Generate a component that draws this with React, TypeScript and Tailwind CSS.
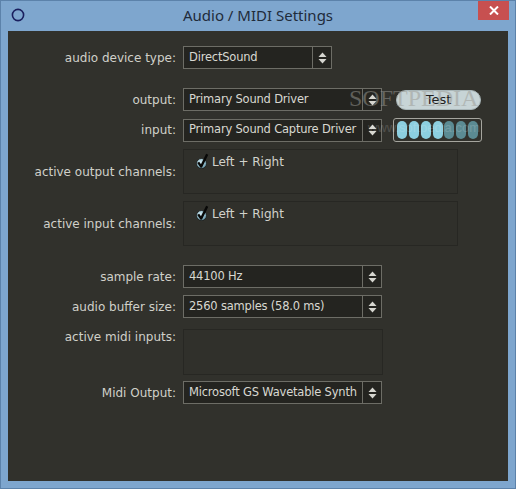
import React from "react";

const font = { fontFamily: '"DejaVu Sans", Verdana, sans-serif' };

function UpDown() {
    return (
        <svg width="9" height="12" viewBox="0 0 9 12">
            <path d="M4.5 0.5 L8.5 5 L0.5 5 Z" fill="#d6d6d0" />
            <path d="M4.5 11.5 L8.5 7 L0.5 7 Z" fill="#d6d6d0" />
        </svg>
    );
}

function Combo({ value, width }: { value: string; width: string }) {
    return (
        <div className={`flex h-[23px] ${width} border border-[#6d6d66] bg-[#242420]`}>
            <div className="flex-1 flex items-center pl-[5px] text-[11.5px] tracking-[-0.2px] text-[#d8d8d1] whitespace-nowrap overflow-hidden">
                {value}
            </div>
            <div className="w-[19px] flex items-center justify-center border-l border-[#6d6d66]">
                <UpDown />
            </div>
        </div>
    );
}

function Check() {
    return (
        <svg width="14" height="16" viewBox="0 0 14 16">
            <defs>
                <radialGradient id="cg" cx="0.4" cy="0.35" r="0.75">
                    <stop offset="0" stopColor="#d4edf5" />
                    <stop offset="1" stopColor="#5b8fa3" />
                </radialGradient>
            </defs>
            <circle cx="5.5" cy="10.5" r="5" fill="url(#cg)" stroke="#1a1a18" strokeWidth="0.8" />
            <path d="M2.2 9.4 L5.2 13.6 L11.2 1.2" fill="none" stroke="#080807" strokeWidth="2.4" strokeLinejoin="round" />
        </svg>
    );
}

function ChannelBox() {
    return (
        <div className="w-[275px] h-[45px] border border-[#272723] bg-[#30302b] pl-[12px] pt-[1px]">
            <div className="flex items-center gap-[2px]">
                <Check />
                <span className="text-[12px] text-[#d2d2cb] mt-[2px]">Left + Right</span>
            </div>
        </div>
    );
}

function Row({ label, children, className = "", alignTop = false }: { label: string; children: React.ReactNode; className?: string; alignTop?: boolean }) {
    return (
        <div className={`flex ${alignTop ? "items-start" : "items-center"} ${className}`}>
            <div className={`w-[169px] pr-[1px] text-right text-[12px] text-[#d0d0c9] whitespace-nowrap ${alignTop ? "-mt-[1px]" : ""}`}>
                {label}
            </div>
            <div className="ml-[6px] flex items-center">{children}</div>
        </div>
    );
}

export default function App() {
    const lit = [true, true, true, true, false, false, false];
    return (
        <div className="w-[516px] h-[489px] bg-[#7ea6ce] border border-[#5c82aa] flex flex-col overflow-hidden">
            {/* Title bar */}
            <div className="h-[30px] flex items-start">
                <div className="w-[40px] pl-[10px] pt-[7px]">
                    <svg width="14" height="14" viewBox="0 0 14 14">
                        <circle cx="7" cy="7" r="5.6" fill="none" stroke="#1a1f5e" strokeWidth="1.6" />
                    </svg>
                </div>
                <div className="flex-1 text-center pt-[3px] text-[15px] text-[#1f2b3a]" style={{ fontFamily: '"Noto Sans", "Open Sans", sans-serif' }}>
                    Audio / MIDI Settings
                </div>
                <div className="w-[40px] flex justify-end pr-[6px]">
                    <div className="w-[31px] h-[19px] bg-[#c75050] flex items-center justify-center">
                        <svg width="10" height="9" viewBox="0 0 10 9">
                            <path d="M1 0.5 L9 8.5 M9 0.5 L1 8.5" stroke="#ffffff" strokeWidth="2" />
                        </svg>
                    </div>
                </div>
            </div>

            {/* Content */}
            <div className="relative flex-1 mx-[7px] mb-[7px] bg-[#31312c] pt-[15px]" style={font}>
                <Row label="audio device type:">
                    <Combo value="DirectSound" width="w-[149px]" />
                </Row>

                <Row label="output:" className="mt-[19px]">
                    <Combo value="Primary Sound Driver" width="w-[199px]" />
                    <div className="ml-[14px] w-[85px] h-[20px] rounded-full bg-[#c7d4d6] border border-[#a9b6b8] flex items-center justify-center text-[13px] text-[#202020]">
                        Test
                    </div>
                </Row>

                <Row label="input:" className="mt-[7px]">
                    <Combo value="Primary Sound Capture Driver" width="w-[199px]" />
                    <div className="ml-[11px] w-[89px] h-[24px] rounded-[3px] border border-[#a5a59e] flex items-center justify-evenly px-[1px]">
                        {lit.map((on, i) => (
                            <div key={i} className={`w-[10px] h-[18px] rounded-full ${on ? "bg-[#8ccfe0]" : "bg-[#5b8b93]"}`} />
                        ))}
                    </div>
                </Row>

                <Row label="active output channels:" className="mt-[7px]">
                    <ChannelBox />
                </Row>

                <Row label="active input channels:" className="mt-[7px]">
                    <ChannelBox />
                </Row>

                <Row label="sample rate:" className="mt-[19px]">
                    <Combo value="44100 Hz" width="w-[199px]" />
                </Row>

                <Row label="audio buffer size:" className="mt-[7px]">
                    <Combo value="2560 samples (58.0 ms)" width="w-[199px]" />
                </Row>

                <Row label="active midi inputs:" className="mt-[11px]" alignTop>
                    <div className="w-[200px] h-[46px] border border-[#272723] bg-[#30302b]" />
                </Row>

                <Row label="Midi Output:" className="mt-[6px]">
                    <Combo value="Microsoft GS Wavetable Synth" width="w-[199px]" />
                </Row>

                {/* watermark */}
                <div className="absolute left-[341px] top-[55px] text-[24px] leading-none text-[#9a9a94] opacity-50 pointer-events-none" style={{ fontFamily: '"Liberation Serif", serif' }}>
                    SOFTPEDIA
                </div>
                <div className="absolute left-[360px] top-[90px] text-[13px] leading-none text-white opacity-15 pointer-events-none" style={{ fontFamily: '"Liberation Sans", sans-serif' }}>
                    www.softpedia.com
                </div>
            </div>
        </div>
    );
}
